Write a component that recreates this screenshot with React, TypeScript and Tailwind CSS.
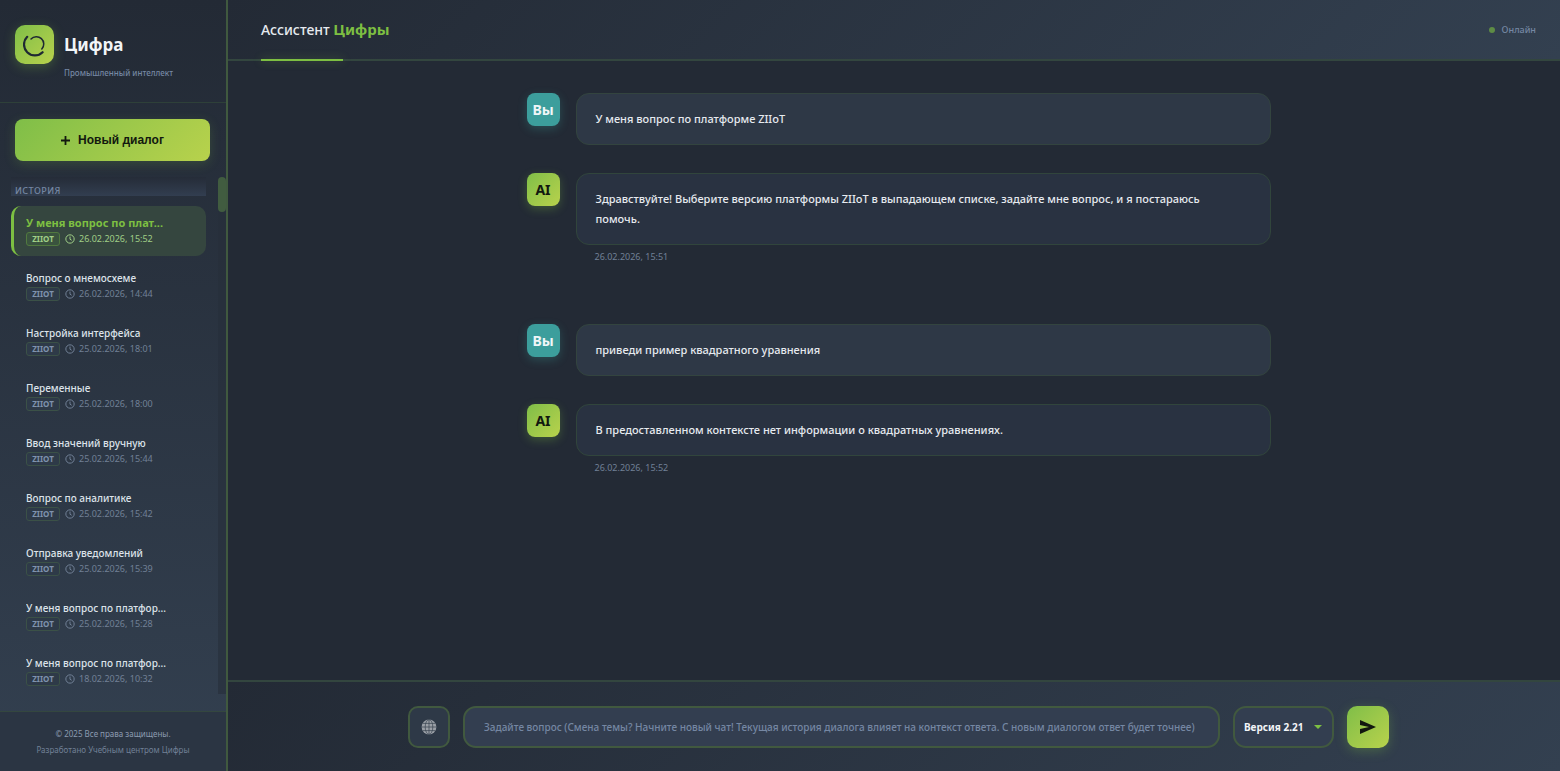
interface Dialog {
  title: string;
  date: string;
}

interface Message {
  role: 'user' | 'ai';
  text: string;
  time?: string;
}

const DIALOGS: Dialog[] = [
  { title: 'У меня вопрос по плат...', date: '26.02.2026, 15:52' },
  { title: 'Вопрос о мнемосхеме', date: '26.02.2026, 14:44' },
  { title: 'Настройка интерфейса', date: '25.02.2026, 18:01' },
  { title: 'Переменные', date: '25.02.2026, 18:00' },
  { title: 'Ввод значений вручную', date: '25.02.2026, 15:44' },
  { title: 'Вопрос по аналитике', date: '25.02.2026, 15:42' },
  { title: 'Отправка уведомлений', date: '25.02.2026, 15:39' },
  { title: 'У меня вопрос по платфор...', date: '25.02.2026, 15:28' },
  { title: 'У меня вопрос по платфор...', date: '18.02.2026, 10:32' },
];

const MESSAGES: Message[] = [
  { role: 'user', text: 'У меня вопрос по платформе ZIIoT' },
  {
    role: 'ai',
    text: 'Здравствуйте! Выберите версию платформы ZIIoT в выпадающем списке, задайте мне вопрос, и я постараюсь помочь.',
    time: '26.02.2026, 15:51',
  },
  { role: 'user', text: 'приведи пример квадратного уравнения' },
  {
    role: 'ai',
    text: 'В предоставленном контексте нет информации о квадратных уравнениях.',
    time: '26.02.2026, 15:52',
  },
];

function LogoIcon() {
  return (
    <svg viewBox="0 0 24 24" className="h-6 w-6" fill="none" stroke="#1f2933" strokeLinecap="round">
      <path d="M4.2 3.8A10.3 10.3 0 0 0 19.6 19.2" strokeWidth="2.2" />
      <path d="M8 6A7.3 7.3 0 0 1 18.8 16" strokeWidth="1.5" />
    </svg>
  );
}

function ClockIcon() {
  return (
    <svg viewBox="0 0 24 24" className="h-[10px] w-[10px]" fill="none" stroke="currentColor" strokeWidth="2.4">
      <circle cx="12" cy="12" r="10" />
      <path d="M12 6v6.5l4 2.5" />
    </svg>
  );
}

function GlobeIcon() {
  return (
    <svg viewBox="0 0 16 16" className="h-4 w-4">
      <circle cx="8" cy="8" r="7.4" fill="#9a9fa6" />
      <g fill="none" stroke="#36424f" strokeWidth="0.7">
        <path d="M8 0.6v14.8M0.6 8h14.8M1.7 4.4h12.6M1.7 11.6h12.6" />
        <ellipse cx="8" cy="8" rx="3.8" ry="7.4" />
      </g>
    </svg>
  );
}

function DialogItem({ dialog, active }: { dialog: Dialog; active: boolean }) {
  return (
    <li>
      <button
        type="button"
        className={`block h-[50px] w-full rounded-[10px] border-l-[3px] px-3 text-left ${
          active ? 'border-[#7dbf42] bg-[#35463f]' : 'border-transparent'
        }`}
      >
        <span
          className={`block truncate leading-4 ${
            active ? 'text-[11px] font-bold text-[#7dbf42]' : 'text-[10px] font-medium text-[#dde3ea]'
          }`}
        >
          {dialog.title}
        </span>
        <span
          className={`flex items-center gap-1 text-[9px] leading-4 ${
            active ? 'text-[#a0cf87]' : 'text-[#718096]'
          }`}
        >
          <span
            className={`mr-px flex w-[34px] justify-center rounded-[3px] border text-[8px] leading-3 font-bold ${
              active
                ? 'border-[#51793f] bg-[#3a533e]'
                : 'border-[#3b5147] bg-[#2e3a48] text-[#7f92ad]'
            }`}
          >
            ZIIOT
          </span>
          <ClockIcon />
          {dialog.date}
        </span>
      </button>
    </li>
  );
}

function Sidebar() {
  return (
    <aside className="flex w-[228px] shrink-0 flex-col border-r-2 border-[#40593f] bg-linear-to-b from-[#232a35] to-[#334050]">
      <div className="flex h-[103px] gap-[10px] border-b border-[#2e4039] pt-[25px] pr-4 pl-[15px]">
        <div className="flex h-[39px] w-[39px] shrink-0 items-center justify-center rounded-[10px] bg-linear-135 from-[#7fbe48] to-[#b8d24c] shadow-[0_3px_12px_rgba(125,190,66,0.3)]">
          <LogoIcon />
        </div>
        <div className="pt-2">
          <h1 className="text-[17px] leading-6 font-bold text-[#f2f5f8]">Цифра</h1>
          <p className="mt-2 text-[8px] leading-4 font-medium text-[#7587a3]">Промышленный интеллект</p>
        </div>
      </div>

      <div className="pt-4 pr-4 pl-[15px]">
        <button
          type="button"
          className="flex h-[42px] w-full items-center justify-center gap-2 rounded-lg bg-linear-135 from-[#7fbe48] to-[#b8d24c] font-['Liberation_Sans',sans-serif] text-[12px] font-bold text-[#12180f] shadow-[0_3px_12px_rgba(125,190,66,0.2)]"
        >
          <svg viewBox="0 0 10 10" className="h-[9px] w-[9px]" stroke="currentColor" strokeWidth="2">
            <path d="M5 0v10M0 5h10" />
          </svg>
          Новый диалог
        </button>
      </div>

      <div className="mt-4 mb-[17px] flex min-h-0 flex-1 overflow-hidden">
        <nav className="min-w-0 flex-1 pr-3 pl-[11px]">
          <h2 className="mb-[10px] bg-linear-to-b from-[#252c38] to-[#323e50] px-1 pt-2 text-[9px] leading-[11px] font-medium tracking-wider text-[#7587a3]">
            ИСТОРИЯ
          </h2>
          <ul className="flex flex-col gap-[5px]">
            {DIALOGS.map((dialog, idx) => (
              <DialogItem key={idx} dialog={dialog} active={idx === 0} />
            ))}
          </ul>
        </nav>
        {/* Scroll track */}
        <div className="w-2 bg-[#262e3a]/60">
          <div className="h-[35px] rounded bg-[#415c40]" />
        </div>
      </div>

      <footer className="border-t border-[#34473f] bg-[#2b3543] pt-[14px] pb-[13px] text-center text-[8px] leading-4">
        <p className="text-[#8c9bb0]">© 2025 Все права защищены.</p>
        <p className="text-[#718096]">Разработано Учебным центром Цифры</p>
      </footer>
    </aside>
  );
}

function MessageRow({ message }: { message: Message }) {
  const isUser = message.role === 'user';

  return (
    <div className={`flex gap-4 ${isUser ? 'mb-7' : 'mb-[59px]'}`}>
      <div
        className={`flex h-[33px] w-[33px] shrink-0 items-center justify-center rounded-lg text-[14px] font-bold ${
          isUser
            ? 'bg-[#3c9e9c] text-[#f0f6f8] shadow-[0_3px_10px_rgba(60,158,156,0.3)]'
            : 'bg-linear-135 from-[#7fbe48] to-[#b8d24c] text-[#12180f] shadow-[0_3px_10px_rgba(125,190,66,0.3)]'
        }`}
      >
        {isUser ? 'Вы' : 'AI'}
      </div>
      <div className="min-w-0 flex-1">
        <div
          className={`rounded-[13px] border py-[15px] pr-10 pl-[19px] text-[11px] leading-5 font-medium text-[#e6eaef] ${
            isUser ? 'border-[#33443f] bg-[#2e3846]' : 'border-[#31453c] bg-[#293241]'
          }`}
        >
          {message.text}
        </div>
        {message.time && (
          <time className="mt-1 block px-[19px] text-[9px] leading-4 text-[#718096]">{message.time}</time>
        )}
      </div>
    </div>
  );
}

export default function App() {
  return (
    <div className="flex h-screen overflow-hidden bg-[#232a35] font-['Noto_Sans','DejaVu_Sans',sans-serif] text-[#e6eaef]">
      <Sidebar />

      <main className="flex min-w-0 flex-1 flex-col">
        {/* Header */}
        <header className="flex h-[61px] shrink-0 flex-col border-b-2 border-[#33463f] bg-linear-135 from-[#232a35] to-[#334050] pr-6 pl-[33px]">
          <div className="flex flex-1 items-center justify-between">
            <h2 className="text-[14px] leading-5 font-medium">
              Ассистент <span className="text-[15px] font-bold text-[#7dbf42]">Цифры</span>
            </h2>
            <div className="flex items-center gap-[7px] text-[9px] font-medium text-[#7587a3]">
              <span className="h-[6px] w-[6px] rounded-full bg-[#5e8c45]" />
              Онлайн
            </div>
          </div>
          <div className="-mb-[2px] h-[2px] w-[82px] bg-[#7dbf42] shadow-[0_0_8px_rgba(125,190,66,0.4)]" />
        </header>

        {/* Messages */}
        <section className="min-h-0 flex-1 overflow-hidden pt-8 pr-6 pl-[33px]">
          <div className="mx-auto max-w-[744px]">
            {MESSAGES.map((message, idx) => (
              <MessageRow key={idx} message={message} />
            ))}
          </div>
        </section>

        {/* Composer */}
        <footer className="shrink-0 border-t-2 border-[#33463f] bg-linear-135 from-[#232a35] to-[#334050] pt-6 pr-6 pb-[23px] pl-[33px]">
          <form className="mx-auto flex max-w-[981px] gap-[13px]">
            <button
              type="button"
              aria-label="Язык"
              className="flex h-[42px] w-[42px] shrink-0 items-center justify-center rounded-[10px] border-2 border-[#41593f] bg-[#2e3947]"
            >
              <GlobeIcon />
            </button>
            <input
              type="text"
              aria-label="Вопрос"
              placeholder="Задайте вопрос (Смена темы? Начните новый чат! Текущая история диалога влияет на контекст ответа. С новым диалогом ответ будет точнее)"
              className="h-[42px] min-w-0 flex-1 rounded-[13px] border-2 border-[#41593f] bg-[#333e50] px-[19px] text-[10px] font-medium outline-none placeholder:text-[#7587a3]"
            />
            <div className="relative w-[101px] shrink-0">
              <select
                aria-label="Версия"
                className="h-[42px] w-full appearance-none rounded-[13px] border-2 border-[#41593f] bg-[#333e50] pr-6 pl-[9px] text-[10px] font-bold text-[#f2f5f8] outline-none"
              >
                <option>Версия 2.21</option>
              </select>
              <svg
                viewBox="0 0 8 4"
                className="pointer-events-none absolute top-[19px] right-3 h-1 w-2"
                fill="#7dbf42"
              >
                <path d="M0 0h8L4 4z" />
              </svg>
            </div>
            <button
              type="submit"
              aria-label="Отправить"
              className="flex h-[42px] w-[42px] shrink-0 items-center justify-center rounded-[10px] bg-linear-135 from-[#7fbe48] to-[#b8d24c] shadow-[0_3px_12px_rgba(125,190,66,0.3)]"
            >
              <svg viewBox="0 0 16 14" className="h-[14px] w-4" fill="#12180f">
                <path d="M0 0L16 7L0 14V9L9 7L0 5z" />
              </svg>
            </button>
          </form>
        </footer>
      </main>
    </div>
  );
}
